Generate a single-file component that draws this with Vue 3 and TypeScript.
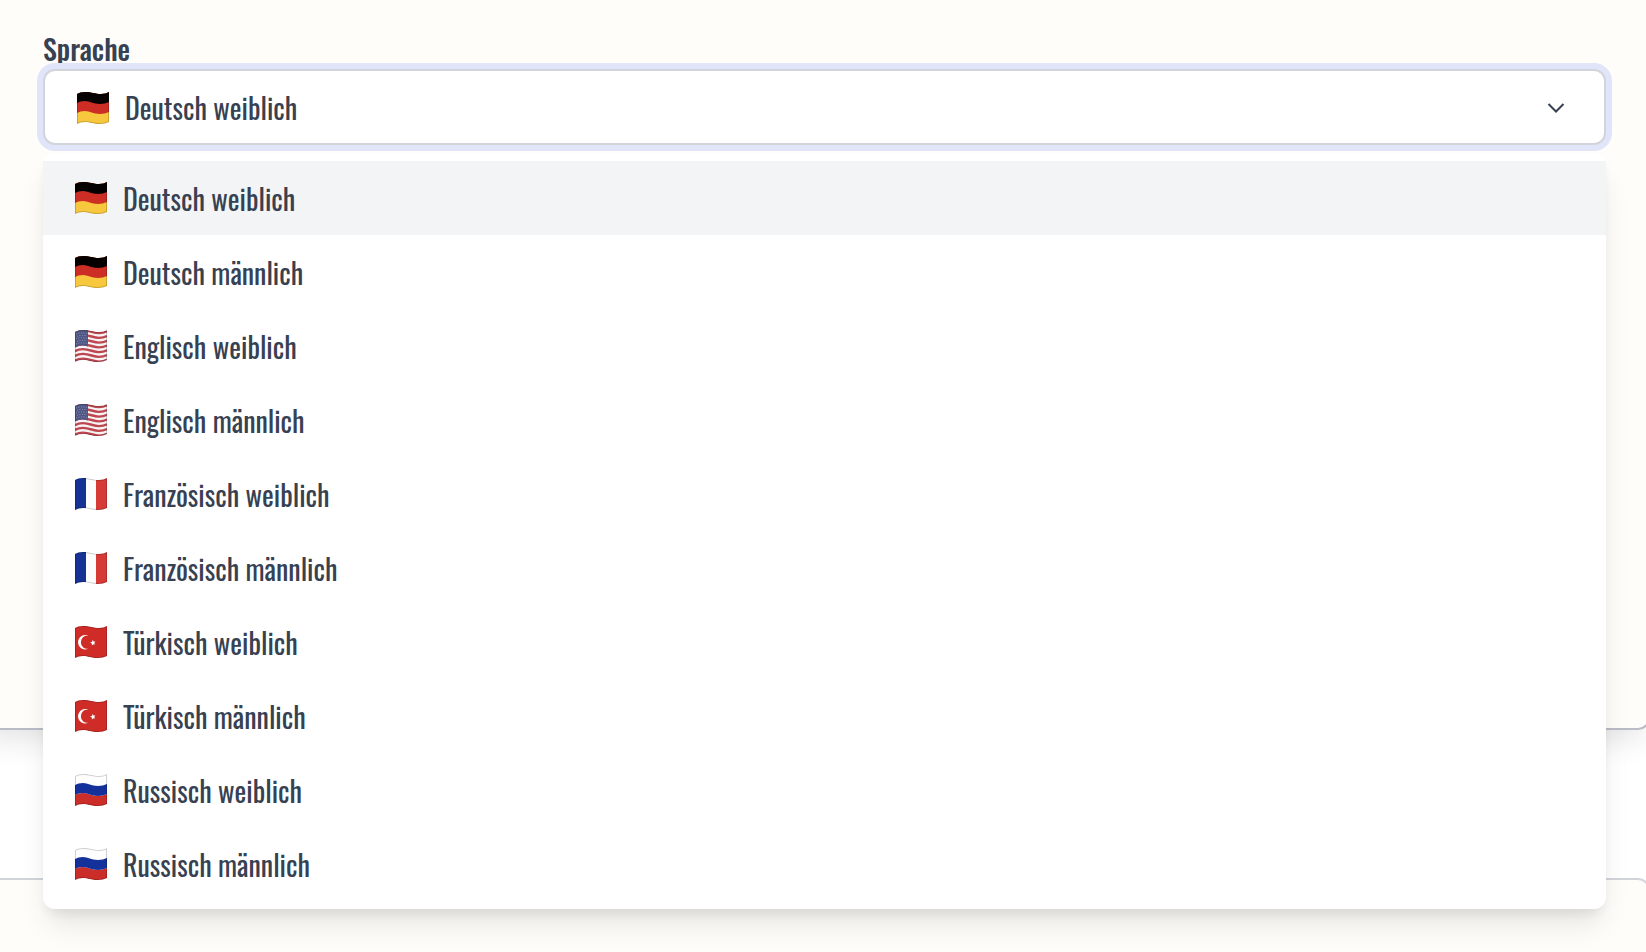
<script setup lang="ts">
import { ref, computed } from 'vue'

type Country = 'de' | 'us' | 'fr' | 'tr' | 'ru'

interface Voice {
  id: string
  country: Country
  label: string
}

const voices: Voice[] = [
  { id: 'de-f', country: 'de', label: 'Deutsch weiblich' },
  { id: 'de-m', country: 'de', label: 'Deutsch männlich' },
  { id: 'en-f', country: 'us', label: 'Englisch weiblich' },
  { id: 'en-m', country: 'us', label: 'Englisch männlich' },
  { id: 'fr-f', country: 'fr', label: 'Französisch weiblich' },
  { id: 'fr-m', country: 'fr', label: 'Französisch männlich' },
  { id: 'tr-f', country: 'tr', label: 'Türkisch weiblich' },
  { id: 'tr-m', country: 'tr', label: 'Türkisch männlich' },
  { id: 'ru-f', country: 'ru', label: 'Russisch weiblich' },
  { id: 'ru-m', country: 'ru', label: 'Russisch männlich' },
]

const open = ref<boolean>(true)
const selectedId = ref<string>('de-f')
const selected = computed<Voice>(() => voices.find((v) => v.id === selectedId.value) ?? voices[0])

function choose(voice: Voice): void {
  selectedId.value = voice.id
  open.value = false
}
</script>

<template>
  <svg class="sprite" width="0" height="0" aria-hidden="true">
    <defs>
      <clipPath id="wave">
        <path d="M0 2Q3 0 8 0C15 0 18 2 24 2Q29 2 32 0V30Q28 32 23 32C16 32 13 30 8 30Q3 30 0 32Z" />
      </clipPath>
      <g id="flag-de">
        <path fill="#f7c83e" d="M0 0h32v32H0z" />
        <path fill="#cc2d24" d="M0 0H32V20Q28 22 23 22C16 22 13 19 8 19Q3 19 0 21Z" />
        <path fill="#050000" d="M0 0H32V10Q28 12 23 12C16 12 13 9 8 9Q3 9 0 11Z" />
      </g>
      <g id="flag-us">
        <path fill="#f7f3f3" d="M0 0h32v32H0z" />
        <g fill="none" stroke="#bd4650" stroke-width="2.4">
          <path v-for="n in 7" :key="n" :d="`M0 ${n * 4.75 - 2.6}Q3 ${n * 4.75 - 4.6} 8 ${n * 4.75 - 4.6}C15 ${n * 4.75 - 4.6} 18 ${n * 4.75 - 1.6} 24 ${n * 4.75 - 1.6}Q29 ${n * 4.75 - 1.6} 32 ${n * 4.75 - 3.6}`" />
        </g>
        <path fill="#4f5684" d="M0 0H13V16.500Q10 15.500 7 15.500Q3 15.500 0 17.500Z" />
        <g fill="none" stroke="#969cba" stroke-width="1" stroke-dasharray="1 1.600">
          <path d="M1 4Q5 2 12 3.500M2 6.500Q6 4.500 12 6M1 9Q5 7 12 8.500M2 11.500Q6 9.500 12 11M1 14Q5 12 12 13.500" />
        </g>
      </g>
      <g id="flag-fr">
        <path fill="#fcfcfc" d="M0 0h32v32H0z" />
        <path fill="#163295" d="M0 0h11v32H0z" />
        <path fill="#d63a36" d="M21 0h11v32H21z" />
      </g>
      <g id="flag-tr">
        <path fill="#cf2c27" d="M0 0h32v32H0z" />
        <path fill="#fff" d="M13.500 10A7 7.200 0 1 0 13.500 22.500A6 6.500 0 1 1 13.500 10Z" />
        <path fill="#fff" d="m15 16.500 2-.5.500-2 1.100 1.600 1.700-.1-1 1.500.8 1.600-1.800-.4-1.300 1.400-.2-2z" />
      </g>
      <g id="flag-ru">
        <path fill="#fefefe" d="M0 0h32v32H0z" />
        <path fill="#cb2d28" d="M0 21Q3 19 8 19C13 19 16 22 23 22Q28 22 32 20V32H0Z" />
        <path fill="#14309a" d="M0 11Q3 9 8 9C13 9 16 12 23 12Q28 12 32 10V20Q28 22 23 22C16 22 13 19 8 19Q3 19 0 21Z" />
      </g>
    </defs>
  </svg>

  <main class="page">
    <section class="card first">
      <label id="language-label" class="label" for="language">Sprache</label>
      <div class="picker">
        <button
          id="language"
          class="trigger"
          type="button"
          role="combobox"
          aria-haspopup="listbox"
          aria-controls="language-list"
          :aria-expanded="open"
          @click="open = !open"
        >
          <svg class="flag" viewBox="0 0 32 32" aria-hidden="true">
            <g clip-path="url(#wave)">
              <use :href="`#flag-${selected.country}`" />
              <path class="outline" d="M0 2Q3 0 8 0C15 0 18 2 24 2Q29 2 32 0V30Q28 32 23 32C16 32 13 30 8 30Q3 30 0 32Z" />
            </g>
          </svg>
          <span class="text">{{ selected.label }}</span>
          <svg class="chevron" viewBox="0 0 20 20" aria-hidden="true">
            <path d="m2.500 6 7.500 7.500 7.500-7.500" />
          </svg>
        </button>

        <ul v-if="open" id="language-list" class="menu" role="listbox" aria-labelledby="language-label">
          <li v-for="voice in voices" :key="voice.id" role="presentation">
            <button
              class="option"
              :class="{ active: voice.id === selectedId }"
              type="button"
              role="option"
              :aria-selected="voice.id === selectedId"
              @click="choose(voice)"
            >
              <svg class="flag" viewBox="0 0 32 32" aria-hidden="true">
                <g clip-path="url(#wave)">
                  <use :href="`#flag-${voice.country}`" />
                  <path class="outline" d="M0 2Q3 0 8 0C15 0 18 2 24 2Q29 2 32 0V30Q28 32 23 32C16 32 13 30 8 30Q3 30 0 32Z" />
                </g>
              </svg>
              <span class="text">{{ voice.label }}</span>
            </button>
          </li>
        </ul>
      </div>
    </section>
    <section class="card second"></section>
  </main>
</template>

<style>
body {
  margin: 0;
  background: #fff;
}
</style>

<style scoped>
.sprite {
  position: absolute;
}

.page {
  box-sizing: border-box;
  display: flex;
  flex-direction: column;
  gap: 148px;
  min-height: 100vh;
  overflow: hidden;
  color: #374151;
  font-family: Oswald, "Liberation Sans Narrow", "Liberation Sans", sans-serif;
  font-size: 28px;
  line-height: 42px;
}

.card {
  box-sizing: border-box;
  margin: 0 -4px 0 -24px;
  border: 2px solid #d1d5db;
  background: #fffdf9;
}

.first {
  min-height: 730px;
  padding: 28px 42px 40px 65px;
  border-color: #b9bcc6;
  border-top: 0;
  border-radius: 0 0 12px 12px;
  box-shadow: 0 16px 32px -8px rgb(0 0 0 / 12%);
}

.second {
  flex: 1;
  border-bottom: 0;
  border-radius: 12px 12px 0 0;
}

.label {
  display: block;
  width: max-content;
  font-weight: 500;
  line-height: 41px;
}

.picker {
  position: relative;
}

.trigger,
.option {
  box-sizing: border-box;
  display: flex;
  align-items: center;
  gap: 16px;
  width: 100%;
  margin: 0;
  color: inherit;
  font: inherit;
  text-align: left;
  cursor: pointer;
}

.trigger {
  padding: 16px 38px 14px 32px;
  border: 2px solid #d1d5db;
  border-radius: 12px;
  background: #fff;
  outline: none;
  box-shadow: 0 0 0 6px #e1e5fa;
}

.flag {
  flex: none;
  width: 32px;
  height: 32px;
}

.outline {
  fill: none;
  stroke: rgb(0 0 0 / 18%);
  stroke-width: 2;
}

.text {
  flex: 1;
}

.chevron {
  flex: none;
  width: 20px;
  height: 20px;
  fill: none;
  stroke: #374151;
  stroke-width: 2;
}

.menu {
  position: absolute;
  z-index: 10;
  top: 100%;
  right: 0;
  left: 0;
  margin: 8px 0 0;
  padding: 8px 0;
  border-radius: 12px;
  background: #fff;
  box-shadow: 0 20px 30px -6px rgb(0 0 0 / 10%), 0 8px 12px -4px rgb(0 0 0 / 8%);
  list-style: none;
}

.option {
  padding: 16px 32px;
  border: 0;
  background: transparent;
}

.option .text {
  padding-top: 2px;
  line-height: 40px;
}

.option.active,
.option:hover {
  background: #f3f4f6;
}
</style>
